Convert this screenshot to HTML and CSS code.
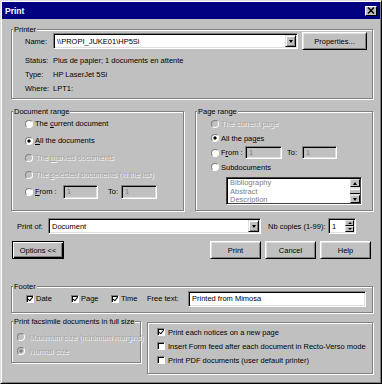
FILE: index.html
```html
<!DOCTYPE html>
<html lang="en">

<head>
    <meta charset="UTF-8">
    <meta name="viewport" content="width=device-width, initial-scale=1.0">
    <title>Print</title>
    <link rel="stylesheet" href="styles.css">
</head>

<body>
    <div class="window">
        <div class="titlebar">
            <span class="title">Print</span>
            <span class="close">
                <svg width="8" height="7" viewBox="0 0 8 7"><path d="M1 0.5 L7 6.5 M7 0.5 L1 6.5" stroke="#000" stroke-width="1.5"/></svg>
            </span>
        </div>

        <div class="content">
            <!-- Printer -->
            <div class="group printer">
                <span class="legend">Printer</span>
                <div class="name-row">
                    <span class="key">Name:</span>
                    <div class="field name-select"><span class="value">\\PROPI_JUKE01\HP5Si</span><span class="drop"></span></div>
                    <span class="btn properties">Properties...</span>
                </div>
                <div class="info-row first"><span class="key">Status:</span><span>Plus de papier; 1 documents en attente</span></div>
                <div class="info-row"><span class="key">Type:</span><span>HP LaserJet 5Si</span></div>
                <div class="info-row"><span class="key">Where:</span><span>LPT1:</span></div>
            </div>

            <!-- Ranges -->
            <div class="ranges">
                <div class="group docrange">
                    <span class="legend">Document range</span>
                    <div class="opt"><span class="radio"></span><span>The <u>c</u>urrent document</span></div>
                    <div class="opt"><span class="radio on"></span><span><u>A</u>ll the documents</span></div>
                    <div class="opt dis"><span class="radio off"></span><span>The <u>m</u>arked documents</span></div>
                    <div class="opt dis"><span class="radio off"></span><span>The <u>s</u>elected documents (in the list)</span></div>
                    <div class="opt">
                        <span class="radio"></span>
                        <span class="from-label"><u>F</u>rom :</span>
                        <span class="field off doc-from"><span class="value">1</span></span>
                        <span class="to-label">To:</span>
                        <span class="field off doc-to"><span class="value">1</span></span>
                    </div>
                </div>

                <div class="group pagerange">
                    <span class="legend">Page range</span>
                    <div class="opt dis"><span class="radio off"></span><span>The current page</span></div>
                    <div class="opt"><span class="radio on"></span><span>All the pa<u>g</u>es</span></div>
                    <div class="opt">
                        <span class="radio"></span>
                        <span class="from-label">F<u>r</u>om :</span>
                        <span class="field off page-from"><span class="value">1</span></span>
                        <span class="to-label">To:</span>
                        <span class="field off page-to"><span class="value">1</span></span>
                    </div>
                    <div class="opt"><span class="radio"></span><span>Subdocuments</span></div>
                    <div class="listbox">
                        <div class="items">
                            <div>Bibliography</div>
                            <div>Abstract</div>
                            <div>Description</div>
                        </div>
                        <div class="scrollbar">
                            <span class="sbtn up"></span>
                            <span class="track"><span class="thumb"></span></span>
                            <span class="sbtn down"></span>
                        </div>
                    </div>
                </div>
            </div>

            <!-- Print of -->
            <div class="printof-row">
                <span class="printof-label">Print of:</span>
                <div class="field printof-select"><span class="value">Document</span><span class="drop"></span></div>
                <span class="copies-label">Nb copies (1-99):</span>
                <div class="field spin">
                    <span class="value">1</span>
                    <span class="spin-btns"><span class="sbtn up"></span><span class="sbtn down"></span></span>
                </div>
            </div>

            <!-- Buttons -->
            <div class="buttons">
                <span class="btn default">Options &lt;&lt;</span>
                <div class="actions">
                    <span class="btn">Print</span>
                    <span class="btn">Cancel</span>
                    <span class="btn">Help</span>
                </div>
            </div>

            <!-- Footer -->
            <div class="group footer">
                <span class="legend">Footer</span>
                <span class="chk-item date"><span class="check on"></span>Date</span>
                <span class="chk-item page"><span class="check on"></span>Page</span>
                <span class="chk-item time"><span class="check on"></span>Time</span>
                <span class="freetext-label">Free text:</span>
                <div class="field freetext"><span class="value">Printed from Mimosa</span></div>
            </div>

            <!-- Bottom options -->
            <div class="bottom">
                <div class="group facsimile">
                    <span class="legend">Print facsimile documents in full size</span>
                    <div class="fopt dis"><span class="radio off"></span><span>Maximum size (minimum margins)</span></div>
                    <div class="fopt dis"><span class="radio off on"></span><span>Normal size</span></div>
                </div>
                <div class="group extras">
                    <div class="xopt"><span class="check on"></span><span>Print each notices on a new page</span></div>
                    <div class="xopt"><span class="check"></span><span>Insert Form feed after each document in Recto-Verso mode</span></div>
                    <div class="xopt"><span class="check"></span><span>Print PDF documents (user default printer)</span></div>
                </div>
            </div>
        </div>
    </div>
</body>

</html>
```

FILE: styles.css
```css
 body {
     margin: 0;
     background-color: #c0c0c0;
     font-family: "Liberation Sans", Arial, sans-serif;
     font-size: 7.5px;
     color: #000;
 }

 .window {
     width: 382px;
     height: 384px;
     box-sizing: border-box;
     padding: 1px;
     background-color: #c0c0c0;
     border: 1px solid;
     border-color: #dfdfdf #000 #000 #dfdfdf;
     box-shadow: inset 1px 1px #fff, inset -1px -1px #808080;
 }

 /* Title bar */
 .titlebar {
     height: 17px;
     background-color: #000080;
     color: #fff;
     display: flex;
     align-items: center;
     justify-content: space-between;
     padding: 0 3px 0 3px;
 }

 .title {
     font-weight: bold;
     font-size: 8.5px;
 }

 .close {
     width: 12px;
     height: 10px;
     box-sizing: border-box;
     background-color: #c0c0c0;
     border: 1px solid;
     border-color: #fff #000 #000 #fff;
     display: flex;
     align-items: center;
     justify-content: center;
 }

 .content {
     padding: 10px 7px 0 9px;
 }

 /* Group boxes */
 .group {
     position: relative;
     box-sizing: border-box;
     border: 1px solid #808080;
     box-shadow: inset 1px 1px #fff, 1px 1px #fff;
 }

 .legend {
     position: absolute;
     top: -5px;
     left: 1px;
     padding: 0 1px;
     line-height: 9px;
     background-color: #c0c0c0;
     white-space: nowrap;
 }

 /* Fields and buttons */
 .field {
     box-sizing: border-box;
     display: flex;
     align-items: center;
     background-color: #fff;
     border: 1px solid;
     border-color: #808080 #fff #fff #808080;
     box-shadow: inset 1px 1px #000, inset -1px -1px #dfdfdf;
 }

 .field.off {
     background-color: #c0c0c0;
     color: #808080;
 }

 .field .value {
     flex: 1;
     padding-left: 3px;
     white-space: nowrap;
     overflow: hidden;
 }

 .drop {
     width: 11px;
     align-self: stretch;
     margin: 1px 1px 1px 0;
     box-sizing: border-box;
     background-color: #c0c0c0;
     border: 1px solid;
     border-color: #dfdfdf #000 #000 #dfdfdf;
     box-shadow: inset 1px 1px #fff, inset -1px -1px #808080;
     display: flex;
     align-items: center;
     justify-content: center;
 }

 .drop::after {
     content: "";
     border-left: 2.5px solid transparent;
     border-right: 2.5px solid transparent;
     border-top: 3px solid #000;
 }

 .btn {
     box-sizing: border-box;
     display: flex;
     align-items: center;
     justify-content: center;
     height: 18px;
     background-color: #c0c0c0;
     border: 1px solid;
     border-color: #fff #000 #000 #fff;
     box-shadow: inset 1px 1px #dfdfdf, inset -1px -1px #808080;
     white-space: nowrap;
 }

 .btn.default {
     border-color: #000;
     box-shadow: inset 1px 1px #fff, inset -1px -1px #000, inset -2px -2px #808080;
 }

 /* Radios and checkboxes */
 .radio {
     flex: none;
     box-sizing: border-box;
     width: 8px;
     height: 8px;
     margin-right: 2px;
     border: 1px solid;
     border-color: #808080 #fff #fff #808080;
     border-radius: 50%;
     background-color: #fff;
 }

 .radio.on {
     background: radial-gradient(circle, #000 0 1.3px, #fff 1.9px);
 }

 .radio.off {
     background: #c0c0c0;
 }

 .radio.off.on {
     background: radial-gradient(circle, #808080 0 1.3px, #c0c0c0 1.9px);
 }

 .check {
     flex: none;
     box-sizing: border-box;
     width: 8px;
     height: 8px;
     margin-right: 2px;
     background-color: #fff;
     border: 1px solid;
     border-color: #808080 #fff #fff #808080;
     box-shadow: inset 1px 1px #000;
     position: relative;
 }

 .check.on::after {
     content: "";
     position: absolute;
     left: 1.5px;
     top: 0;
     width: 2px;
     height: 3.5px;
     border: solid #000;
     border-width: 0 1.4px 1.4px 0;
     transform: rotate(40deg);
 }

 .dis {
     color: #a6a6a6;
     text-shadow: 1px 1px 0 #f4f4f4;
 }

 /* Printer */
 .printer {
     height: 70px;
     padding: 2px 5px 0 13px;
 }

 .name-row {
     display: flex;
     align-items: center;
     height: 18px;
 }

 .key {
     width: 28px;
     flex: none;
 }

 .name-select {
     width: 245px;
     height: 16px;
     margin-right: 4px;
 }

 .properties {
     width: 65px;
 }

 .info-row {
     display: flex;
     align-items: center;
     height: 14px;
 }

 .info-row.first {
     margin-top: 3px;
 }

 /* Ranges */
 .ranges {
     display: flex;
     gap: 11px;
     margin-top: 12px;
 }

 .docrange {
     width: 173px;
     height: 100px;
     padding: 3px 0 0 13px;
 }

 .docrange .opt {
     height: 17px;
 }

 .pagerange {
     width: 178px;
     height: 100px;
     padding: 4.5px 0 0 15px;
 }

 .pagerange .opt {
     height: 14.5px;
 }

 .opt {
     display: flex;
     align-items: center;
     white-space: nowrap;
 }

 .from-label {
     width: 28px;
 }

 .to-label {
     width: 13px;
     margin-left: 10px;
 }

 .doc-from {
     width: 35px;
     height: 14px;
 }

 .doc-to {
     width: 36px;
     height: 14px;
 }

 .pagerange .from-label {
     width: 24px;
 }

 .pagerange .to-label {
     width: 15px;
     margin-left: 5px;
 }

 .page-from {
     width: 37px;
     height: 13px;
 }

 .page-to {
     width: 35px;
     height: 13px;
 }

 .listbox {
     display: flex;
     box-sizing: border-box;
     width: 136px;
     height: 28px;
     margin: 2.5px 0 0 15px;
     background-color: #fff;
     border: 1px solid;
     border-color: #404040 #fff #fff #404040;
     box-shadow: inset 1px 1px #000, inset -1px -1px #404040;
     padding: 1px;
 }

 .items {
     flex: 1;
     color: #808080;
     line-height: 8.6px;
     padding-left: 2px;
 }

 .scrollbar {
     width: 10px;
     display: flex;
     flex-direction: column;
     background-color: #e0e0e0;
 }

 .sbtn {
     box-sizing: border-box;
     height: 8px;
     background-color: #c0c0c0;
     border: 1px solid;
     border-color: #dfdfdf #000 #000 #dfdfdf;
     display: flex;
     align-items: center;
     justify-content: center;
 }

 .sbtn.up::after,
 .sbtn.down::after {
     content: "";
     border-left: 2.5px solid transparent;
     border-right: 2.5px solid transparent;
 }

 .sbtn.up::after {
     border-bottom: 3px solid #000;
 }

 .sbtn.down::after {
     border-top: 3px solid #000;
 }

 .track {
     flex: 1;
     display: flex;
     align-items: center;
 }

 .thumb {
     width: 100%;
     height: 3px;
     background-color: #c0c0c0;
     border-top: 1px solid #fff;
     border-bottom: 1px solid #000;
 }

 /* Print of row */
 .printof-row {
     display: flex;
     align-items: center;
     height: 16px;
     margin-top: 7px;
     padding-left: 6px;
 }

 .printof-label {
     width: 31px;
 }

 .printof-select {
     width: 213px;
     height: 16px;
 }

 .copies-label {
     margin-left: 7px;
     width: 60px;
     white-space: nowrap;
 }

 .spin {
     width: 28px;
     height: 16px;
     align-items: stretch;
 }

 .spin .value {
     display: flex;
     align-items: center;
 }

 .spin-btns {
     width: 9px;
     margin: 1px 1px 1px 0;
     display: flex;
     flex-direction: column;
 }

 .spin-btns .sbtn {
     flex: 1;
     height: auto;
 }

 .spin-btns .sbtn::after {
     border-left-width: 2px;
     border-right-width: 2px;
 }

 .spin-btns .sbtn.up::after {
     border-bottom-width: 2px;
 }

 .spin-btns .sbtn.down::after {
     border-top-width: 2px;
 }

 /* Buttons */
 .buttons {
     display: flex;
     justify-content: space-between;
     margin-top: 7px;
     padding: 0 2px 0 1px;
 }

 .buttons .default {
     width: 52px;
 }

 .actions {
     display: flex;
     gap: 4px;
 }

 .actions .btn {
     width: 51px;
 }

 /* Footer */
 .footer {
     display: flex;
     align-items: center;
     height: 27px;
     margin-top: 27px;
     padding: 0 0 2px 14px;
 }

 .chk-item {
     display: flex;
     align-items: center;
 }

 .chk-item.date {
     width: 45px;
 }

 .chk-item.page {
     width: 40px;
 }

 .chk-item.time {
     width: 36px;
 }

 .freetext-label {
     width: 41px;
 }

 .freetext {
     width: 178px;
     height: 16px;
 }

 /* Bottom groups */
 .bottom {
     display: flex;
     align-items: flex-start;
     gap: 6px;
     margin-top: 8px;
 }

 .facsimile {
     width: 130px;
     height: 42px;
     padding: 8px 0 0 5px;
 }

 .fopt {
     display: flex;
     align-items: center;
     height: 14px;
     white-space: nowrap;
 }

 .fopt .radio {
     margin-right: 4px;
 }

 .extras {
     width: 226px;
     height: 52px;
     margin-top: 1px;
     padding: 2px 0 0 9px;
 }

 .xopt {
     display: flex;
     align-items: center;
     height: 14px;
     white-space: nowrap;
 }

 .xopt .check {
     margin-right: 3px;
 }
```
